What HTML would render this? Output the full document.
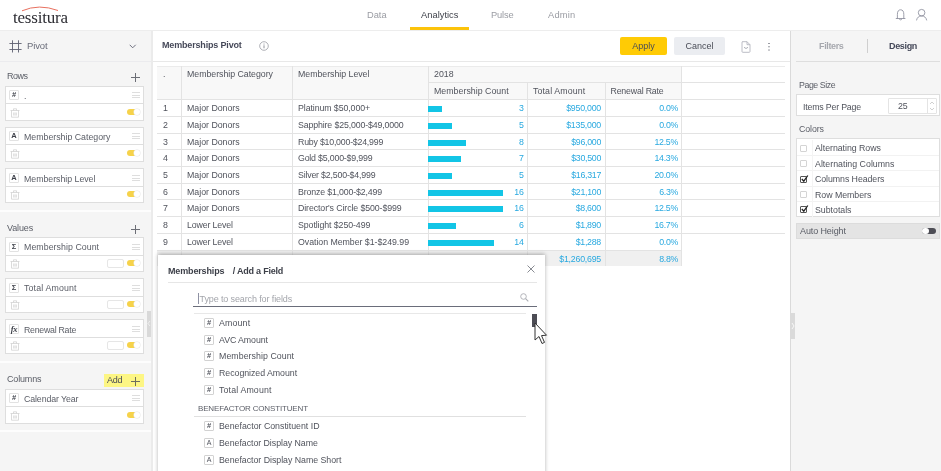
<!DOCTYPE html><html><head><meta charset="utf-8"><title>Memberships Pivot</title><style>
*{box-sizing:border-box;margin:0;padding:0}
html,body{width:941px;height:471px;overflow:hidden;background:#fff}
body{will-change:transform;font-family:"Liberation Sans",sans-serif;font-size:8.8px;color:#50535c;position:relative}
.abs{position:absolute}
.t{position:absolute;white-space:nowrap;line-height:12px}
#top{position:absolute;left:0;top:0;width:941px;height:31px;background:#fff;border-bottom:1px solid #ededed}
.tab{position:absolute;top:9px;font-size:9.3px;color:#9a9ca3;white-space:nowrap;line-height:12px}
#left{position:absolute;left:0;top:31px;width:151px;height:440px;background:#f5f5f5}
#gap{position:absolute;left:151px;top:31px;width:2px;height:440px;background:#ebebeb}
#center{position:absolute;left:153px;top:31px;width:637px;height:440px;background:#fff}
#right{position:absolute;left:790px;top:31px;width:151px;height:440px;background:#f5f5f5;border-left:1px solid #dadada}
.card{position:absolute;left:5px;width:139px;height:35px;background:#fff;border:1px solid #dedede}
.card .mid{position:absolute;left:0;top:16px;width:137px;height:1px;background:#dedede}
.card .lbl{position:absolute;left:18px;top:3px;white-space:nowrap;line-height:12px;font-size:8.8px;color:#5a5d66}
.ico{position:absolute;left:3px;top:3px;width:10px;height:10px;border:1px solid #e2e2e2;border-radius:1px;font-size:7.5px;line-height:8px;text-align:center;font-weight:bold;color:#3c3f48;background:#fff}
.ham{position:absolute;left:126px;top:5px;width:8px;height:6px;border-top:1px solid #dedede;border-bottom:1px solid #dedede}
.ham:after{content:"";position:absolute;left:0;top:1.5px;width:8px;height:1px;background:#dedede}
.tog{position:absolute;left:121px;top:22px;width:13px;height:6px;border-radius:3px;background:#f6d24a}
.tog:after{content:"";position:absolute;right:0;top:0;width:6px;height:6px;border-radius:3px;background:#fff;box-shadow:0 0 0 0.5px #e5e5e5}
.fmt{position:absolute;left:101px;top:21px;width:17px;height:9px;border:1px solid #e6e6e6;border-radius:2px;background:#fff}
.trash{position:absolute;left:4px;top:21px;width:10px;height:10px}
.sec{position:absolute;left:7px;font-size:9px;color:#5a5d66;line-height:12px}
.plus{position:absolute;left:131px;width:9px;height:9px;opacity:.8}
.plus:before{content:"";position:absolute;left:0;top:4px;width:9px;height:1px;background:#4a4d57}
.plus:after{content:"";position:absolute;left:4px;top:0;width:1px;height:9px;background:#4a4d57}
.hl{position:absolute;background:#e3e3e3;height:1px}
.vl{position:absolute;background:#e3e3e3;width:1px}
.cell{position:absolute;white-space:nowrap;line-height:12px;color:#50535c}
.num{color:#29a9e0;text-align:right}
.bar{position:absolute;height:6px;background:#12c5e6}
.fi{position:absolute;width:10px;height:10px;border:1px solid #d2d2d2;border-radius:1px;font-size:7.5px;line-height:8px;text-align:center;font-weight:bold;color:#50535c;background:#fff}
.chk{position:absolute;left:4px;width:7px;height:7px;border:1px solid #d4d4d4;border-radius:1px;background:#fff}
</style></head><body>
<div id="top">
<svg class="abs" style="left:20px;top:6px" width="40" height="6" viewBox="0 0 40 6"><path d="M2 4.800 Q19 -2.500 38 4.500" fill="none" stroke="#e8705f" stroke-width="1"/></svg>
<div class="t" style="left:13px;top:9px;font-family:'Liberation Serif',serif;font-size:17px;line-height:18px;color:#2d2d33;letter-spacing:-0.2px">tessitura</div>
<div class="tab" style="left:367px"><span style="letter-spacing:-0.01px">Data</span></div>
<div class="tab" style="left:421px;color:#3f424b"><span style="letter-spacing:0.03px">Analytics</span></div>
<div class="tab" style="left:491px"><span style="letter-spacing:-0.17px">Pulse</span></div>
<div class="tab" style="left:548px"><span style="letter-spacing:0.21px">Admin</span></div>
<div class="abs" style="left:410px;top:27px;width:59px;height:3px;background:#fcc30a"></div>
<svg class="abs" style="left:895px;top:8px" width="12" height="14" viewBox="0 0 12 14"><path d="M2.400 10.500 V6.400 A3.200 4.600 0 0 1 8.800 6.400 V10.500 M0.800 10.500 H10.400" fill="none" stroke="#7d8090" stroke-width="0.75"/><path d="M4.500 10.800 a1.100 1.100 0 0 0 2.200 0" fill="none" stroke="#7d8090" stroke-width="0.7"/></svg>
<svg class="abs" style="left:915px;top:8px" width="14" height="14" viewBox="0 0 14 14"><circle cx="6.600" cy="4.700" r="3.300" fill="none" stroke="#7d8090" stroke-width="0.75"/><path d="M1.500 12.400 C2 9.500 4 7.900 6.600 7.900 C9.200 7.900 11.200 9.500 11.700 12.400" fill="none" stroke="#7d8090" stroke-width="0.75"/></svg>
</div>
<div id="left">
<div class="abs" style="left:0;top:30px;width:151px;height:1px;background:#ebebee"></div>
<svg class="abs" style="left:9px;top:9px" width="13" height="13" viewBox="0 0 13 13"><path d="M3.500 0.300 v12.200 M9.500 0.300 v12.200 M0.400 3.500 h12.200 M0.400 9.500 h12.200" stroke="#5d6070" stroke-width="0.9" fill="none"/></svg>
<div class="t" style="left:27px;top:9px;font-size:9.5px;color:#6a6d7a"><span style="letter-spacing:-0.15px">Pivot</span></div>
<svg class="abs" style="left:129px;top:13px" width="8" height="5" viewBox="0 0 8 5"><path d="M0.700 0.800 L3.700 3.800 L6.700 0.800" fill="none" stroke="#5d6070" stroke-width="0.9"/></svg>
<div class="sec" style="top:39px"><span style="letter-spacing:-0.53px">Rows</span></div>
<div class="plus" style="top:42px"></div>
<div class="card" style="top:55px"><div class="ico" style="top:3px;">#</div><div class="lbl" style="top:3px">.</div><div class="ham" style="top:5px"></div><div class="mid" style="top:16px"></div><svg class="trash" viewBox="0 0 10 10"><path d="M0.500 2.500 h9 M3.500 2.500 v-1.700 h3 v1.700 M1.500 2.500 v6.700 h7 v-6.700 M3.700 4.500 v3 M5 4.500 v3 M6.300 4.500 v3" fill="none" stroke="#d2d2d2" stroke-width="0.8"/></svg><div class="tog"></div></div>
<div class="card" style="top:96px"><div class="ico" style="top:3px;">A</div><div class="lbl" style="top:3px"><span style="letter-spacing:-0.01px">Membership Category</span></div><div class="ham" style="top:5px"></div><div class="mid" style="top:16px"></div><svg class="trash" viewBox="0 0 10 10"><path d="M0.500 2.500 h9 M3.500 2.500 v-1.700 h3 v1.700 M1.500 2.500 v6.700 h7 v-6.700 M3.700 4.500 v3 M5 4.500 v3 M6.300 4.500 v3" fill="none" stroke="#d2d2d2" stroke-width="0.8"/></svg><div class="tog"></div></div>
<div class="card" style="top:137px"><div class="ico" style="top:4px;">A</div><div class="lbl" style="top:4px"><span style="letter-spacing:-0.03px">Membership Level</span></div><div class="ham" style="top:6px"></div><div class="mid" style="top:17px"></div><svg class="trash" viewBox="0 0 10 10"><path d="M0.500 2.500 h9 M3.500 2.500 v-1.700 h3 v1.700 M1.500 2.500 v6.700 h7 v-6.700 M3.700 4.500 v3 M5 4.500 v3 M6.300 4.500 v3" fill="none" stroke="#d2d2d2" stroke-width="0.8"/></svg><div class="tog"></div></div>
<div class="abs" style="left:0;top:179px;width:151px;height:2px;background:#fdfdfd"></div>
<div class="sec" style="top:191px"><span style="letter-spacing:-0.14px">Values</span></div>
<div class="plus" style="top:194px"></div>
<div class="card" style="top:206px"><div class="ico" style="top:4px;">&Sigma;</div><div class="lbl" style="top:3px"><span style="letter-spacing:0.05px">Membership Count</span></div><div class="ham" style="top:6px"></div><div class="mid" style="top:17px"></div><svg class="trash" viewBox="0 0 10 10"><path d="M0.500 2.500 h9 M3.500 2.500 v-1.700 h3 v1.700 M1.500 2.500 v6.700 h7 v-6.700 M3.700 4.500 v3 M5 4.500 v3 M6.300 4.500 v3" fill="none" stroke="#d2d2d2" stroke-width="0.8"/></svg><div class="fmt"></div><div class="tog"></div></div>
<div class="card" style="top:247px"><div class="ico" style="top:4px;">&Sigma;</div><div class="lbl" style="top:3px"><span style="letter-spacing:0.15px">Total Amount</span></div><div class="ham" style="top:6px"></div><div class="mid" style="top:17px"></div><svg class="trash" viewBox="0 0 10 10"><path d="M0.500 2.500 h9 M3.500 2.500 v-1.700 h3 v1.700 M1.500 2.500 v6.700 h7 v-6.700 M3.700 4.500 v3 M5 4.500 v3 M6.300 4.500 v3" fill="none" stroke="#d2d2d2" stroke-width="0.8"/></svg><div class="fmt"></div><div class="tog"></div></div>
<div class="card" style="top:288px"><div class="ico" style="top:4px;font-family:'Liberation Serif',serif;font-size:8.5px;letter-spacing:-0.3px"><i>fx</i></div><div class="lbl" style="top:4px"><span style="letter-spacing:-0.27px">Renewal Rate</span></div><div class="ham" style="top:6px"></div><div class="mid" style="top:17px"></div><svg class="trash" viewBox="0 0 10 10"><path d="M0.500 2.500 h9 M3.500 2.500 v-1.700 h3 v1.700 M1.500 2.500 v6.700 h7 v-6.700 M3.700 4.500 v3 M5 4.500 v3 M6.300 4.500 v3" fill="none" stroke="#d2d2d2" stroke-width="0.8"/></svg><div class="fmt"></div><div class="tog"></div></div>
<div class="abs" style="left:0;top:330px;width:151px;height:2px;background:#fdfdfd"></div>
<div class="sec" style="top:342px"><span style="letter-spacing:-0.17px">Columns</span></div>
<div class="abs" style="left:104px;top:343px;width:40px;height:13px;background:#fdf684"></div><div class="t" style="left:107px;top:343px;font-size:9px;color:#4a4d57"><span style="letter-spacing:-0.24px">Add</span></div>
<div class="plus" style="top:346px"></div>
<div class="card" style="top:358px"><div class="ico" style="top:3px;">#</div><div class="lbl" style="top:3px"><span style="letter-spacing:-0.11px">Calendar Year</span></div><div class="ham" style="top:5px"></div><div class="mid" style="top:16px"></div><svg class="trash" viewBox="0 0 10 10"><path d="M0.500 2.500 h9 M3.500 2.500 v-1.700 h3 v1.700 M1.500 2.500 v6.700 h7 v-6.700 M3.700 4.500 v3 M5 4.500 v3 M6.300 4.500 v3" fill="none" stroke="#d2d2d2" stroke-width="0.8"/></svg><div class="tog"></div></div>
<div class="abs" style="left:0;top:399px;width:151px;height:2px;background:#fdfdfd"></div>
<div class="abs" style="left:147px;top:280px;width:4px;height:26px;background:#d9d9d9"></div>
<svg class="abs" style="left:147px;top:289px" width="4" height="7" viewBox="0 0 4 7"><path d="M3 1 L1 3.500 L3 6" fill="none" stroke="#f5f5f5" stroke-width="0.8"/></svg>
</div>
<div id="gap"></div>
<div id="center">
<div class="abs" style="left:0;top:30px;width:637px;height:1px;background:#e8e8e8"></div>
<div class="t" style="left:9px;top:8px;font-weight:bold;font-size:9px;color:#464959;"><span style="letter-spacing:-0.17px">Memberships Pivot</span></div>
<svg class="abs" style="left:106.30000000000001px;top:10.399999999999999px" width="10" height="10" viewBox="0 0 10 10"><circle cx="5" cy="5" r="4.300" fill="none" stroke="#9a9ca3" stroke-width="0.800"/><path d="M5 4.300 v3 M5 2.600 v0.900" stroke="#85878f" stroke-width="0.900"/></svg>
<div class="abs" style="left:467px;top:6px;width:47px;height:18px;background:#ffcb05;border-radius:2px;text-align:center;line-height:18px;font-size:9px;color:#4a4d57">Apply</div>
<div class="abs" style="left:521px;top:6px;width:51px;height:18px;background:#ebedf1;border-radius:2px;text-align:center;line-height:18px;font-size:9px;color:#4a4d57">Cancel</div>
<svg class="abs" style="left:588px;top:9.5px" width="10" height="12" viewBox="0 0 10 12"><path d="M1.500 0.700 h4.500 l3 3 v6.800 q0 0.800 -0.800 0.800 h-6.400 q-0.800 0 -0.800 -0.800 v-9 q0 -0.800 0.800 -0.800 Z M6 0.700 v3 h3" fill="none" stroke="#b4b6c0" stroke-width="0.9"/><path d="M3 6.300 q2 2.400 4 0" fill="none" stroke="#a4a6b0" stroke-width="0.9"/></svg>
<div class="abs" style="left:615px;top:11.700000000000003px;width:1.600px;height:1.600px;background:#8d8f97;border-radius:0.500px;box-shadow:0 3.300px 0 #8d8f97,0 6.600px 0 #8d8f97"></div>
<div class="abs" style="left:4px;top:35px;width:525px;height:33px;background:#f8f8f8"></div>
<div class="abs" style="left:4px;top:219px;width:525px;height:15.500px;background:#f0f0f0"></div>
<div class="hl" style="left:4px;top:35px;width:628px;background:#ebebeb"></div>
<div class="hl" style="left:275px;top:51px;width:357px;background:#e3e3e3"></div>
<div class="hl" style="left:4px;top:68px;width:628px;background:#e3e3e3"></div>
<div class="hl" style="left:4px;top:85px;width:628px;background:#e3e3e3"></div>
<div class="hl" style="left:4px;top:102px;width:628px;background:#e3e3e3"></div>
<div class="hl" style="left:4px;top:118px;width:628px;background:#e3e3e3"></div>
<div class="hl" style="left:4px;top:135px;width:628px;background:#e3e3e3"></div>
<div class="hl" style="left:4px;top:152px;width:628px;background:#e3e3e3"></div>
<div class="hl" style="left:4px;top:168px;width:628px;background:#e3e3e3"></div>
<div class="hl" style="left:4px;top:185px;width:628px;background:#e3e3e3"></div>
<div class="hl" style="left:4px;top:202px;width:628px;background:#e3e3e3"></div>
<div class="hl" style="left:4px;top:219px;width:525px;background:#e3e3e3"></div>
<div class="vl" style="left:28px;top:35px;height:199.5px;background:#e3e3e3"></div>
<div class="vl" style="left:139px;top:35px;height:199.5px;background:#e3e3e3"></div>
<div class="vl" style="left:275px;top:35px;height:199.5px;background:#e3e3e3"></div>
<div class="vl" style="left:528px;top:35px;height:199.5px;background:#e3e3e3"></div>
<div class="vl" style="left:374px;top:51px;height:183.5px;background:#e3e3e3"></div>
<div class="vl" style="left:452px;top:51px;height:183.5px;background:#e3e3e3"></div>
<div class="cell " style="left:10px;top:37px;">.</div>
<div class="cell " style="left:34px;top:37px;"><span style="letter-spacing:-0.03px">Membership Category</span></div>
<div class="cell " style="left:145px;top:37px;"><span style="letter-spacing:-0.03px">Membership Level</span></div>
<div class="cell " style="left:281px;top:37px;">2018</div>
<div class="cell " style="left:281px;top:54px;"><span style="letter-spacing:0.02px">Membership Count</span></div>
<div class="cell " style="left:380px;top:54px;"><span style="letter-spacing:0.13px">Total Amount</span></div>
<div class="cell " style="left:457.5px;top:54px;"><span style="letter-spacing:-0.19px">Renewal Rate</span></div>
<div class="cell " style="left:10px;top:71px;">1</div>
<div class="cell " style="left:34px;top:71px;"><span style="letter-spacing:-0.01px">Major Donors</span></div>
<div class="cell " style="left:145px;top:71px;"><span style="letter-spacing:-0.09px">Platinum $50,000+</span></div>
<div class="bar" style="left:275px;top:74.5px;width:14.3px"></div>
<div class="cell num" style="left:326.5px;top:71px;width:44px;letter-spacing:-0.3px">3</div>
<div class="cell num" style="left:387px;top:71px;width:61px;"><span style="letter-spacing:-0.24px">$950,000</span></div>
<div class="cell num" style="left:467px;top:71px;width:58px;"><span style="letter-spacing:-0.33px">0.0%</span></div>
<div class="cell " style="left:10px;top:88px;">2</div>
<div class="cell " style="left:34px;top:88px;"><span style="letter-spacing:-0.01px">Major Donors</span></div>
<div class="cell " style="left:145px;top:88px;"><span style="letter-spacing:-0.14px">Sapphire $25,000-$49,0000</span></div>
<div class="bar" style="left:275px;top:91.5px;width:23.6px"></div>
<div class="cell num" style="left:326.5px;top:88px;width:44px;letter-spacing:-0.3px">5</div>
<div class="cell num" style="left:387px;top:88px;width:61px;"><span style="letter-spacing:-0.24px">$135,000</span></div>
<div class="cell num" style="left:467px;top:88px;width:58px;"><span style="letter-spacing:-0.33px">0.0%</span></div>
<div class="cell " style="left:10px;top:105px;">3</div>
<div class="cell " style="left:34px;top:105px;"><span style="letter-spacing:-0.01px">Major Donors</span></div>
<div class="cell " style="left:145px;top:105px;"><span style="letter-spacing:-0.22px">Ruby $10,000-$24,999</span></div>
<div class="bar" style="left:275px;top:108.5px;width:37.6px"></div>
<div class="cell num" style="left:326.5px;top:105px;width:44px;letter-spacing:-0.3px">8</div>
<div class="cell num" style="left:387px;top:105px;width:61px;"><span style="letter-spacing:-0.29px">$96,000</span></div>
<div class="cell num" style="left:467px;top:105px;width:58px;"><span style="letter-spacing:-0.29px">12.5%</span></div>
<div class="cell " style="left:10px;top:121px;">4</div>
<div class="cell " style="left:34px;top:121px;"><span style="letter-spacing:-0.01px">Major Donors</span></div>
<div class="cell " style="left:145px;top:121px;"><span style="letter-spacing:-0.19px">Gold $5,000-$9,999</span></div>
<div class="bar" style="left:275px;top:124.5px;width:32.9px"></div>
<div class="cell num" style="left:326.5px;top:121px;width:44px;letter-spacing:-0.3px">7</div>
<div class="cell num" style="left:387px;top:121px;width:61px;"><span style="letter-spacing:-0.29px">$30,500</span></div>
<div class="cell num" style="left:467px;top:121px;width:58px;"><span style="letter-spacing:-0.29px">14.3%</span></div>
<div class="cell " style="left:10px;top:138px;">5</div>
<div class="cell " style="left:34px;top:138px;"><span style="letter-spacing:-0.01px">Major Donors</span></div>
<div class="cell " style="left:145px;top:138px;"><span style="letter-spacing:-0.19px">Silver $2,500-$4,999</span></div>
<div class="bar" style="left:275px;top:141.5px;width:23.6px"></div>
<div class="cell num" style="left:326.5px;top:138px;width:44px;letter-spacing:-0.3px">5</div>
<div class="cell num" style="left:387px;top:138px;width:61px;"><span style="letter-spacing:-0.29px">$16,317</span></div>
<div class="cell num" style="left:467px;top:138px;width:58px;"><span style="letter-spacing:-0.29px">20.0%</span></div>
<div class="cell " style="left:10px;top:155px;">6</div>
<div class="cell " style="left:34px;top:155px;"><span style="letter-spacing:-0.01px">Major Donors</span></div>
<div class="cell " style="left:145px;top:155px;"><span style="letter-spacing:-0.16px">Bronze $1,000-$2,499</span></div>
<div class="bar" style="left:275px;top:158.5px;width:74.9px"></div>
<div class="cell num" style="left:326.5px;top:155px;width:44px;letter-spacing:-0.3px">16</div>
<div class="cell num" style="left:387px;top:155px;width:61px;"><span style="letter-spacing:-0.29px">$21,100</span></div>
<div class="cell num" style="left:467px;top:155px;width:58px;"><span style="letter-spacing:-0.33px">6.3%</span></div>
<div class="cell " style="left:10px;top:171px;">7</div>
<div class="cell " style="left:34px;top:171px;"><span style="letter-spacing:-0.01px">Major Donors</span></div>
<div class="cell " style="left:145px;top:171px;"><span style="letter-spacing:-0.10px">Director's Circle $500-$999</span></div>
<div class="bar" style="left:275px;top:174.5px;width:74.9px"></div>
<div class="cell num" style="left:326.5px;top:171px;width:44px;letter-spacing:-0.3px">16</div>
<div class="cell num" style="left:387px;top:171px;width:61px;"><span style="letter-spacing:-0.27px">$8,600</span></div>
<div class="cell num" style="left:467px;top:171px;width:58px;"><span style="letter-spacing:-0.29px">12.5%</span></div>
<div class="cell " style="left:10px;top:188px;">8</div>
<div class="cell " style="left:34px;top:188px;"><span style="letter-spacing:-0.14px">Lower Level</span></div>
<div class="cell " style="left:145px;top:188px;"><span style="letter-spacing:-0.09px">Spotlight $250-499</span></div>
<div class="bar" style="left:275px;top:191.5px;width:28.3px"></div>
<div class="cell num" style="left:326.5px;top:188px;width:44px;letter-spacing:-0.3px">6</div>
<div class="cell num" style="left:387px;top:188px;width:61px;"><span style="letter-spacing:-0.27px">$1,890</span></div>
<div class="cell num" style="left:467px;top:188px;width:58px;"><span style="letter-spacing:-0.29px">16.7%</span></div>
<div class="cell " style="left:10px;top:205px;">9</div>
<div class="cell " style="left:34px;top:205px;"><span style="letter-spacing:-0.14px">Lower Level</span></div>
<div class="cell " style="left:145px;top:205px;"><span style="letter-spacing:-0.04px">Ovation Member $1-$249.99</span></div>
<div class="bar" style="left:275px;top:208.5px;width:65.5px"></div>
<div class="cell num" style="left:326.5px;top:205px;width:44px;letter-spacing:-0.3px">14</div>
<div class="cell num" style="left:387px;top:205px;width:61px;"><span style="letter-spacing:-0.27px">$1,288</span></div>
<div class="cell num" style="left:467px;top:205px;width:58px;"><span style="letter-spacing:-0.33px">0.0%</span></div>
<div class="cell " style="left:34px;top:222px;">Grand Total</div>
<div class="cell num" style="left:387px;top:222px;width:61px;"><span style="letter-spacing:-0.23px">$1,260,695</span></div>
<div class="cell num" style="left:467px;top:222px;width:58px;"><span style="letter-spacing:-0.33px">8.8%</span></div>
<div class="abs" style="left:5px;top:224px;width:387px;height:230px;background:#fff;box-shadow:0 -1px 4px rgba(0,0,0,0.3)">
<div class="t" style="left:10px;top:10px;font-weight:bold;font-size:9px;color:#3c3f48;"><span style="letter-spacing:-0.15px">Memberships</span><span style="display:inline-block;width:8.3px"></span><span style="letter-spacing:-0.21px">/ Add a Field</span></div>
<svg class="abs" style="left:369px;top:10px" width="8" height="8" viewBox="0 0 8 8"><path d="M0.500 0.500 L7.500 7.500 M7.500 0.500 L0.500 7.500" stroke="#6a6d76" stroke-width="0.8"/></svg>
<div class="hl" style="left:10px;top:27px;width:369px;background:#e6e6e6"></div>
<div class="abs" style="left:40px;top:38px;width:1px;height:11px;background:#8e91a3"></div>
<div class="t" style="left:41.5px;top:38px;color:#a3a5ab;font-size:9px"><span style="letter-spacing:-0.12px">Type to search for fields</span></div>
<svg class="abs" style="left:362px;top:38px" width="9" height="9" viewBox="0 0 9 9"><circle cx="3.500" cy="3.500" r="2.800" fill="none" stroke="#aaacb2" stroke-width="0.9"/><path d="M5.600 5.600 L8.300 8.300" stroke="#aaacb2" stroke-width="1.100"/></svg>
<div class="hl" style="left:35px;top:51px;width:344px;background:#6a6d7a"></div>
<div class="hl" style="left:36px;top:58px;width:332px;background:#e8e8e8"></div>
<div class="fi" style="left:46px;top:63px;">#</div><div class="t" style="left:61px;top:62px;color:#50535c"><span style="letter-spacing:0.16px">Amount</span></div>
<div class="fi" style="left:46px;top:80px;">#</div><div class="t" style="left:61px;top:79px;color:#50535c"><span style="letter-spacing:-0.08px">AVC Amount</span></div>
<div class="fi" style="left:46px;top:96px;">#</div><div class="t" style="left:61px;top:95px;color:#50535c"><span style="letter-spacing:0.05px">Membership Count</span></div>
<div class="fi" style="left:46px;top:113px;">#</div><div class="t" style="left:61px;top:112px;color:#50535c"><span style="letter-spacing:-0.04px">Recognized Amount</span></div>
<div class="fi" style="left:46px;top:130px;">#</div><div class="t" style="left:61px;top:129px;color:#50535c"><span style="letter-spacing:0.14px">Total Amount</span></div>
<div class="fi" style="left:46px;top:166px;">#</div><div class="t" style="left:61px;top:165px;color:#50535c"><span style="letter-spacing:-0.01px">Benefactor Constituent ID</span></div>
<div class="fi" style="left:46px;top:183px;font-weight:normal;font-size:7px;">A</div><div class="t" style="left:61px;top:182px;color:#50535c"><span style="letter-spacing:-0.04px">Benefactor Display Name</span></div>
<div class="fi" style="left:46px;top:200px;font-weight:normal;font-size:7px;">A</div><div class="t" style="left:61px;top:199px;color:#50535c"><span style="letter-spacing:-0.03px">Benefactor Display Name Short</span></div>
<div class="t" style="left:40px;top:148px;font-size:8px;color:#5a5d66"><span style="letter-spacing:-0.15px">BENEFACTOR CONSTITUENT</span></div>
<div class="hl" style="left:36px;top:161px;width:332px;background:#e0e0e0"></div>
<div class="abs" style="left:374px;top:59px;width:5px;height:13px;background:#4d4d55"></div>
<svg class="abs" style="left:376px;top:67px" width="14" height="24" viewBox="0 0 14 24"><path d="M1 1 V18 L5 14.500 L8 21.500 L10.500 20.400 L7.500 13.600 L12.500 13.200 Z" fill="#fff" stroke="#333" stroke-width="1"/></svg>
</div>
</div>
<div id="right">
<div class="abs" style="left:-1px;top:282px;width:5px;height:26px;background:#dadada"></div>
<svg class="abs" style="left:0px;top:291px" width="4" height="8" viewBox="0 0 4 8"><path d="M1 1 L3 4 L1 7" fill="none" stroke="#fafafa" stroke-width="0.9"/></svg>
<div class="t" style="left:28px;top:9px;font-weight:bold;font-size:9px;color:#a6a8ae"><span style="letter-spacing:-0.36px">Filters</span></div>
<div class="abs" style="left:76px;top:8px;width:1px;height:14px;background:#cfcfcf"></div>
<div class="t" style="left:98px;top:9px;font-weight:bold;font-size:9px;color:#454959"><span style="letter-spacing:-0.34px">Design</span></div>
<div class="hl" style="left:5px;top:30px;width:144px;background:#dedede"></div>
<div class="t" style="left:8px;top:48px;color:#5a5d66"><span style="letter-spacing:-0.43px">Page Size</span></div>
<div class="abs" style="left:5px;top:63px;width:144px;height:22px;background:#fff;border:1px solid #dedede"></div>
<div class="t" style="left:12px;top:70px;color:#50535c"><span style="letter-spacing:-0.19px">Items Per Page</span></div>
<div class="abs" style="left:97px;top:67px;width:49px;height:16px;border:1px solid #e4e4e4;background:#fff;border-radius:1px"></div>
<div class="abs" style="left:136px;top:67px;width:1px;height:16px;background:#e4e4e4"></div>
<div class="t" style="left:107px;top:69px;color:#50535c"><span style="letter-spacing:-0.05px">25</span></div>
<svg class="abs" style="left:138px;top:69px" width="6" height="12" viewBox="0 0 6 12"><path d="M1 4 L3 2 L5 4 M1 8 L3 10 L5 8" fill="none" stroke="#c4c4c4" stroke-width="0.8"/></svg>
<div class="t" style="left:8px;top:92px;color:#5a5d66"><span style="letter-spacing:-0.09px">Colors</span></div>
<div class="abs" style="left:5px;top:107px;width:144px;height:79px;background:#fff;border:1px solid #dedede"></div>
<div class="chk" style="left:9px;top:114px"></div>
<div class="t" style="left:24px;top:111px;color:#50535c"><span style="letter-spacing:-0.04px">Alternating Rows</span></div>
<div class="hl" style="left:6px;top:124px;width:142px;background:#f2f2f2"></div>
<div class="chk" style="left:9px;top:129px"></div>
<div class="t" style="left:24px;top:127px;color:#50535c"><span style="letter-spacing:0.01px">Alternating Columns</span></div>
<div class="hl" style="left:6px;top:139px;width:142px;background:#f2f2f2"></div>
<div class="chk" style="left:9px;top:145px;border-color:#555"></div><svg class="abs" style="left:9px;top:143px" width="9" height="9" viewBox="0 0 9 9"><path d="M1.800 5 L3.800 7.200 L7.800 1.500" fill="none" stroke="#222" stroke-width="1.300"/></svg>
<div class="t" style="left:24px;top:142px;color:#50535c"><span style="letter-spacing:-0.07px">Columns Headers</span></div>
<div class="hl" style="left:6px;top:155px;width:142px;background:#f2f2f2"></div>
<div class="chk" style="left:9px;top:160px"></div>
<div class="t" style="left:24px;top:158px;color:#50535c"><span style="letter-spacing:-0.04px">Row Members</span></div>
<div class="hl" style="left:6px;top:170px;width:142px;background:#f2f2f2"></div>
<div class="chk" style="left:9px;top:175px;border-color:#555"></div><svg class="abs" style="left:9px;top:173px" width="9" height="9" viewBox="0 0 9 9"><path d="M1.800 5 L3.800 7.200 L7.800 1.500" fill="none" stroke="#222" stroke-width="1.300"/></svg>
<div class="t" style="left:24px;top:173px;color:#50535c"><span style="letter-spacing:-0.02px">Subtotals</span></div>
<div class="vl" style="left:21px;top:109px;height:77px;background:#f4f4f4"></div>
<div class="abs" style="left:5px;top:192px;width:144px;height:16px;background:#e4e4e4;border:1px solid #dcdcdc"></div>
<div class="t" style="left:9px;top:194px;color:#5a5d66;font-size:9px"><span style="letter-spacing:-0.11px">Auto Height</span></div>
<div class="abs" style="left:131px;top:197px;width:14px;height:6px;border-radius:3px;background:#4d4d55"></div><div class="abs" style="left:131px;top:197px;width:7px;height:6px;border-radius:3px;background:#fff"></div>
</div>
</body></html>
